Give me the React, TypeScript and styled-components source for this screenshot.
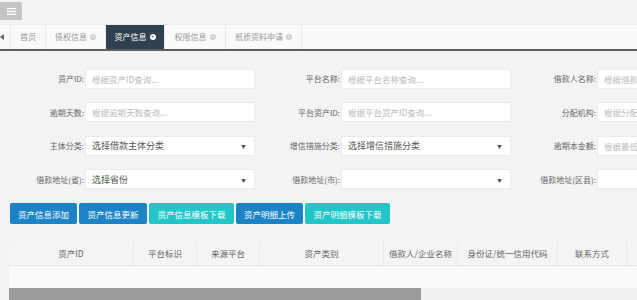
import React from 'react'
import styled, { createGlobalStyle } from 'styled-components'

const GlobalStyle = createGlobalStyle`
  html, body {
    margin: 0;
    padding: 0;
    background: #f3f3f4;
    overflow: hidden;
  }
  body {
    font-family: 'Noto Sans CJK SC', 'Liberation Sans', sans-serif;
    color: #676a6c;
  }
`

const Page = styled.div`
  width: 637px;
  height: 300px;
  overflow: hidden;
  display: flex;
  flex-direction: column;
`

const TopBar = styled.div`
  height: 24px;
  display: flex;
  align-items: flex-start;
  padding-top: 2px;
  box-sizing: border-box;
  background: #f3f3f4;
`

const MenuButton = styled.div`
  width: 22px;
  height: 18px;
  background: #c4c4c4;
  border-radius: 0 2px 2px 0;
  display: flex;
  align-items: center;
  justify-content: center;
`

const TabBar = styled.div`
  height: 27px;
  display: flex;
  background: #fafafa;
  border-top: 1px solid #ececec;
  border-bottom: 2px solid #5e5e5e;
  box-sizing: border-box;
`

const TabArrow = styled.div`
  width: 10px;
  display: flex;
  align-items: center;
  border-right: 1px solid #eaeaea;
`

const Tab = styled.div<{ $active?: boolean; $w: number }>`
  width: ${p => p.$w}px;
  display: flex;
  align-items: center;
  justify-content: center;
  gap: 3px;
  font-size: 8px;
  color: ${p => (p.$active ? '#ffffff' : '#999')};
  background: ${p => (p.$active ? '#2f4050' : 'transparent')};
  border-right: 1px solid #eaeaea;
  box-sizing: border-box;
`

const CloseDot = styled.span<{ $active?: boolean }>`
  width: 6px;
  height: 6px;
  border-radius: 50%;
  background: ${p => (p.$active ? '#ffffff' : '#cfcfcf')};
  display: inline-flex;
  align-items: center;
  justify-content: center;
  color: ${p => (p.$active ? '#2f4050' : '#fafafa')};
  font-size: 5px;
  line-height: 1;
  font-family: 'DejaVu Sans', sans-serif;
`

const Content = styled.div`
  padding-top: 18px;
  display: flex;
  flex-direction: column;
`

const FormGrid = styled.div`
  display: grid;
  grid-template-columns: repeat(3, 256px);
  row-gap: 13.5px;
`

const Field = styled.div`
  display: flex;
  align-items: center;
  height: 20px;
`

const Label = styled.label`
  width: 84px;
  padding-right: 1px;
  text-align: right;
  font-size: 8px;
  color: #666;
  white-space: nowrap;
`

const Input = styled.div`
  width: 170px;
  height: 20px;
  box-sizing: border-box;
  background: #fff;
  border: 1px solid #ebebeb;
  padding: 0 6px;
  display: flex;
  align-items: center;
  font-size: 8.5px;
  color: #bbb;
  white-space: nowrap;
  overflow: hidden;
`

const Select = styled(Input)`
  justify-content: space-between;
  font-size: 9px;
  color: #555;
`

const Caret = styled.span`
  font-size: 5px;
  color: #555;
  margin-right: 2px;
`

const ButtonRow = styled.div`
  margin-top: 14px;
  padding-left: 10px;
  display: flex;
  gap: 2px;
`

const Button = styled.div<{ $kind: 'primary' | 'info'; $w: number }>`
  width: ${p => p.$w}px;
  height: 21px;
  border-radius: 2px;
  display: flex;
  align-items: center;
  justify-content: center;
  font-size: 8.5px;
  color: #fff;
  background: ${p => (p.$kind === 'primary' ? '#1c84c6' : '#23c6c8')};
`

const TableWrap = styled.div`
  margin-top: 17px;
  margin-left: 9px;
  display: flex;
  flex-direction: column;
`

const Table = styled.table`
  border-collapse: collapse;
  table-layout: fixed;
  width: 720px;
`

const Th = styled.th<{ $w: number }>`
  width: ${p => p.$w}px;
  height: 24px;
  padding: 0;
  font-size: 8.5px;
  font-weight: normal;
  color: #666;
  background: #f4f4f4;
  border-right: 1px solid #e9e9e9;
  border-bottom: 1px solid #e9e9e9;
  white-space: nowrap;
`

const Td = styled.td`
  height: 22px;
  background: #fbfbfb;
  padding: 0;
`

const ScrollTrack = styled.div`
  height: 12px;
  background: #f1f1f1;
  display: flex;
`

const ScrollThumb = styled.div`
  background: #9b9b9b;
`

const tabs = [
  { name: '首页', w: 35, close: false },
  { name: '债权信息', w: 60, close: true },
  { name: '资产信息', w: 59, close: true, active: true },
  { name: '权限信息', w: 61, close: true },
  { name: '纸质资料申请', w: 76, close: true },
]

type F = { label: string; text: string; select?: boolean }
const fields: F[] = [
  { label: '资产ID:', text: '根据资产ID查询...' },
  { label: '平台名称:', text: '根据平台名称查询...' },
  { label: '借款人名称:', text: '根据借款人名称查询...' },
  { label: '逾期天数:', text: '根据逾期天数查询...' },
  { label: '平台资产ID:', text: '根据平台资产ID查询...' },
  { label: '分配机构:', text: '根据分配机构查询...' },
  { label: '主体分类:', text: '选择借款主体分类', select: true },
  { label: '增信措施分类:', text: '选择增信措施分类', select: true },
  { label: '逾期本金额:', text: '根据最低逾期本金额查询...' },
  { label: '借款地址(省):', text: '选择省份', select: true },
  { label: '借款地址(市):', text: '', select: true },
  { label: '借款地址(区县):', text: '' },
]

const buttons: { text: string; kind: 'primary' | 'info'; w: number }[] = [
  { text: '资产信息添加', kind: 'primary', w: 67 },
  { text: '资产信息更新', kind: 'primary', w: 68 },
  { text: '资产信息模板下载', kind: 'info', w: 85 },
  { text: '资产明细上传', kind: 'primary', w: 67 },
  { text: '资产明细模板下载', kind: 'info', w: 85 },
]

const columns = [
  { name: '资产ID', w: 124 },
  { name: '平台标识', w: 62 },
  { name: '来源平台', w: 62 },
  { name: '资产类别', w: 123 },
  { name: '借款人/企业名称', w: 73 },
  { name: '身份证/统一信用代码', w: 99 },
  { name: '联系方式', w: 68 },
  { name: '', w: 109 },
]

export default function App() {
  return (
    <Page>
      <GlobalStyle />
      <TopBar>
        <MenuButton>
          <svg width="9" height="7" viewBox="0 0 9 7">
            <rect x="0" y="0" width="9" height="1.4" fill="#fff" />
            <rect x="0" y="2.8" width="9" height="1.4" fill="#fff" />
            <rect x="0" y="5.6" width="9" height="1.4" fill="#fff" />
          </svg>
        </MenuButton>
      </TopBar>
      <TabBar>
        <TabArrow>
          <svg width="5" height="6" viewBox="0 0 5 6">
            <path d="M0 3 L4 0 L4 6 Z" fill="#666" />
          </svg>
        </TabArrow>
        {tabs.map(t => (
          <Tab key={t.name} $w={t.w} $active={t.active}>
            {t.name}
            {t.close && <CloseDot $active={t.active}>×</CloseDot>}
          </Tab>
        ))}
      </TabBar>
      <Content>
        <FormGrid>
          {fields.map(f => (
            <Field key={f.label}>
              <Label>{f.label}</Label>
              {f.select ? (
                <Select>
                  <span>{f.text}</span>
                  <Caret>▼</Caret>
                </Select>
              ) : (
                <Input>{f.text}</Input>
              )}
            </Field>
          ))}
        </FormGrid>
        <ButtonRow>
          {buttons.map(b => (
            <Button key={b.text} $kind={b.kind} $w={b.w}>
              {b.text}
            </Button>
          ))}
        </ButtonRow>
        <TableWrap>
          <Table>
            <thead>
              <tr>
                {columns.map((c, i) => (
                  <Th key={i} $w={c.w}>
                    {c.name}
                  </Th>
                ))}
              </tr>
            </thead>
            <tbody>
              <tr>
                <Td colSpan={columns.length} />
              </tr>
            </tbody>
          </Table>
          <ScrollTrack>
            <ScrollThumb style={{ width: 412 }} />
          </ScrollTrack>
        </TableWrap>
      </Content>
    </Page>
  )
}
